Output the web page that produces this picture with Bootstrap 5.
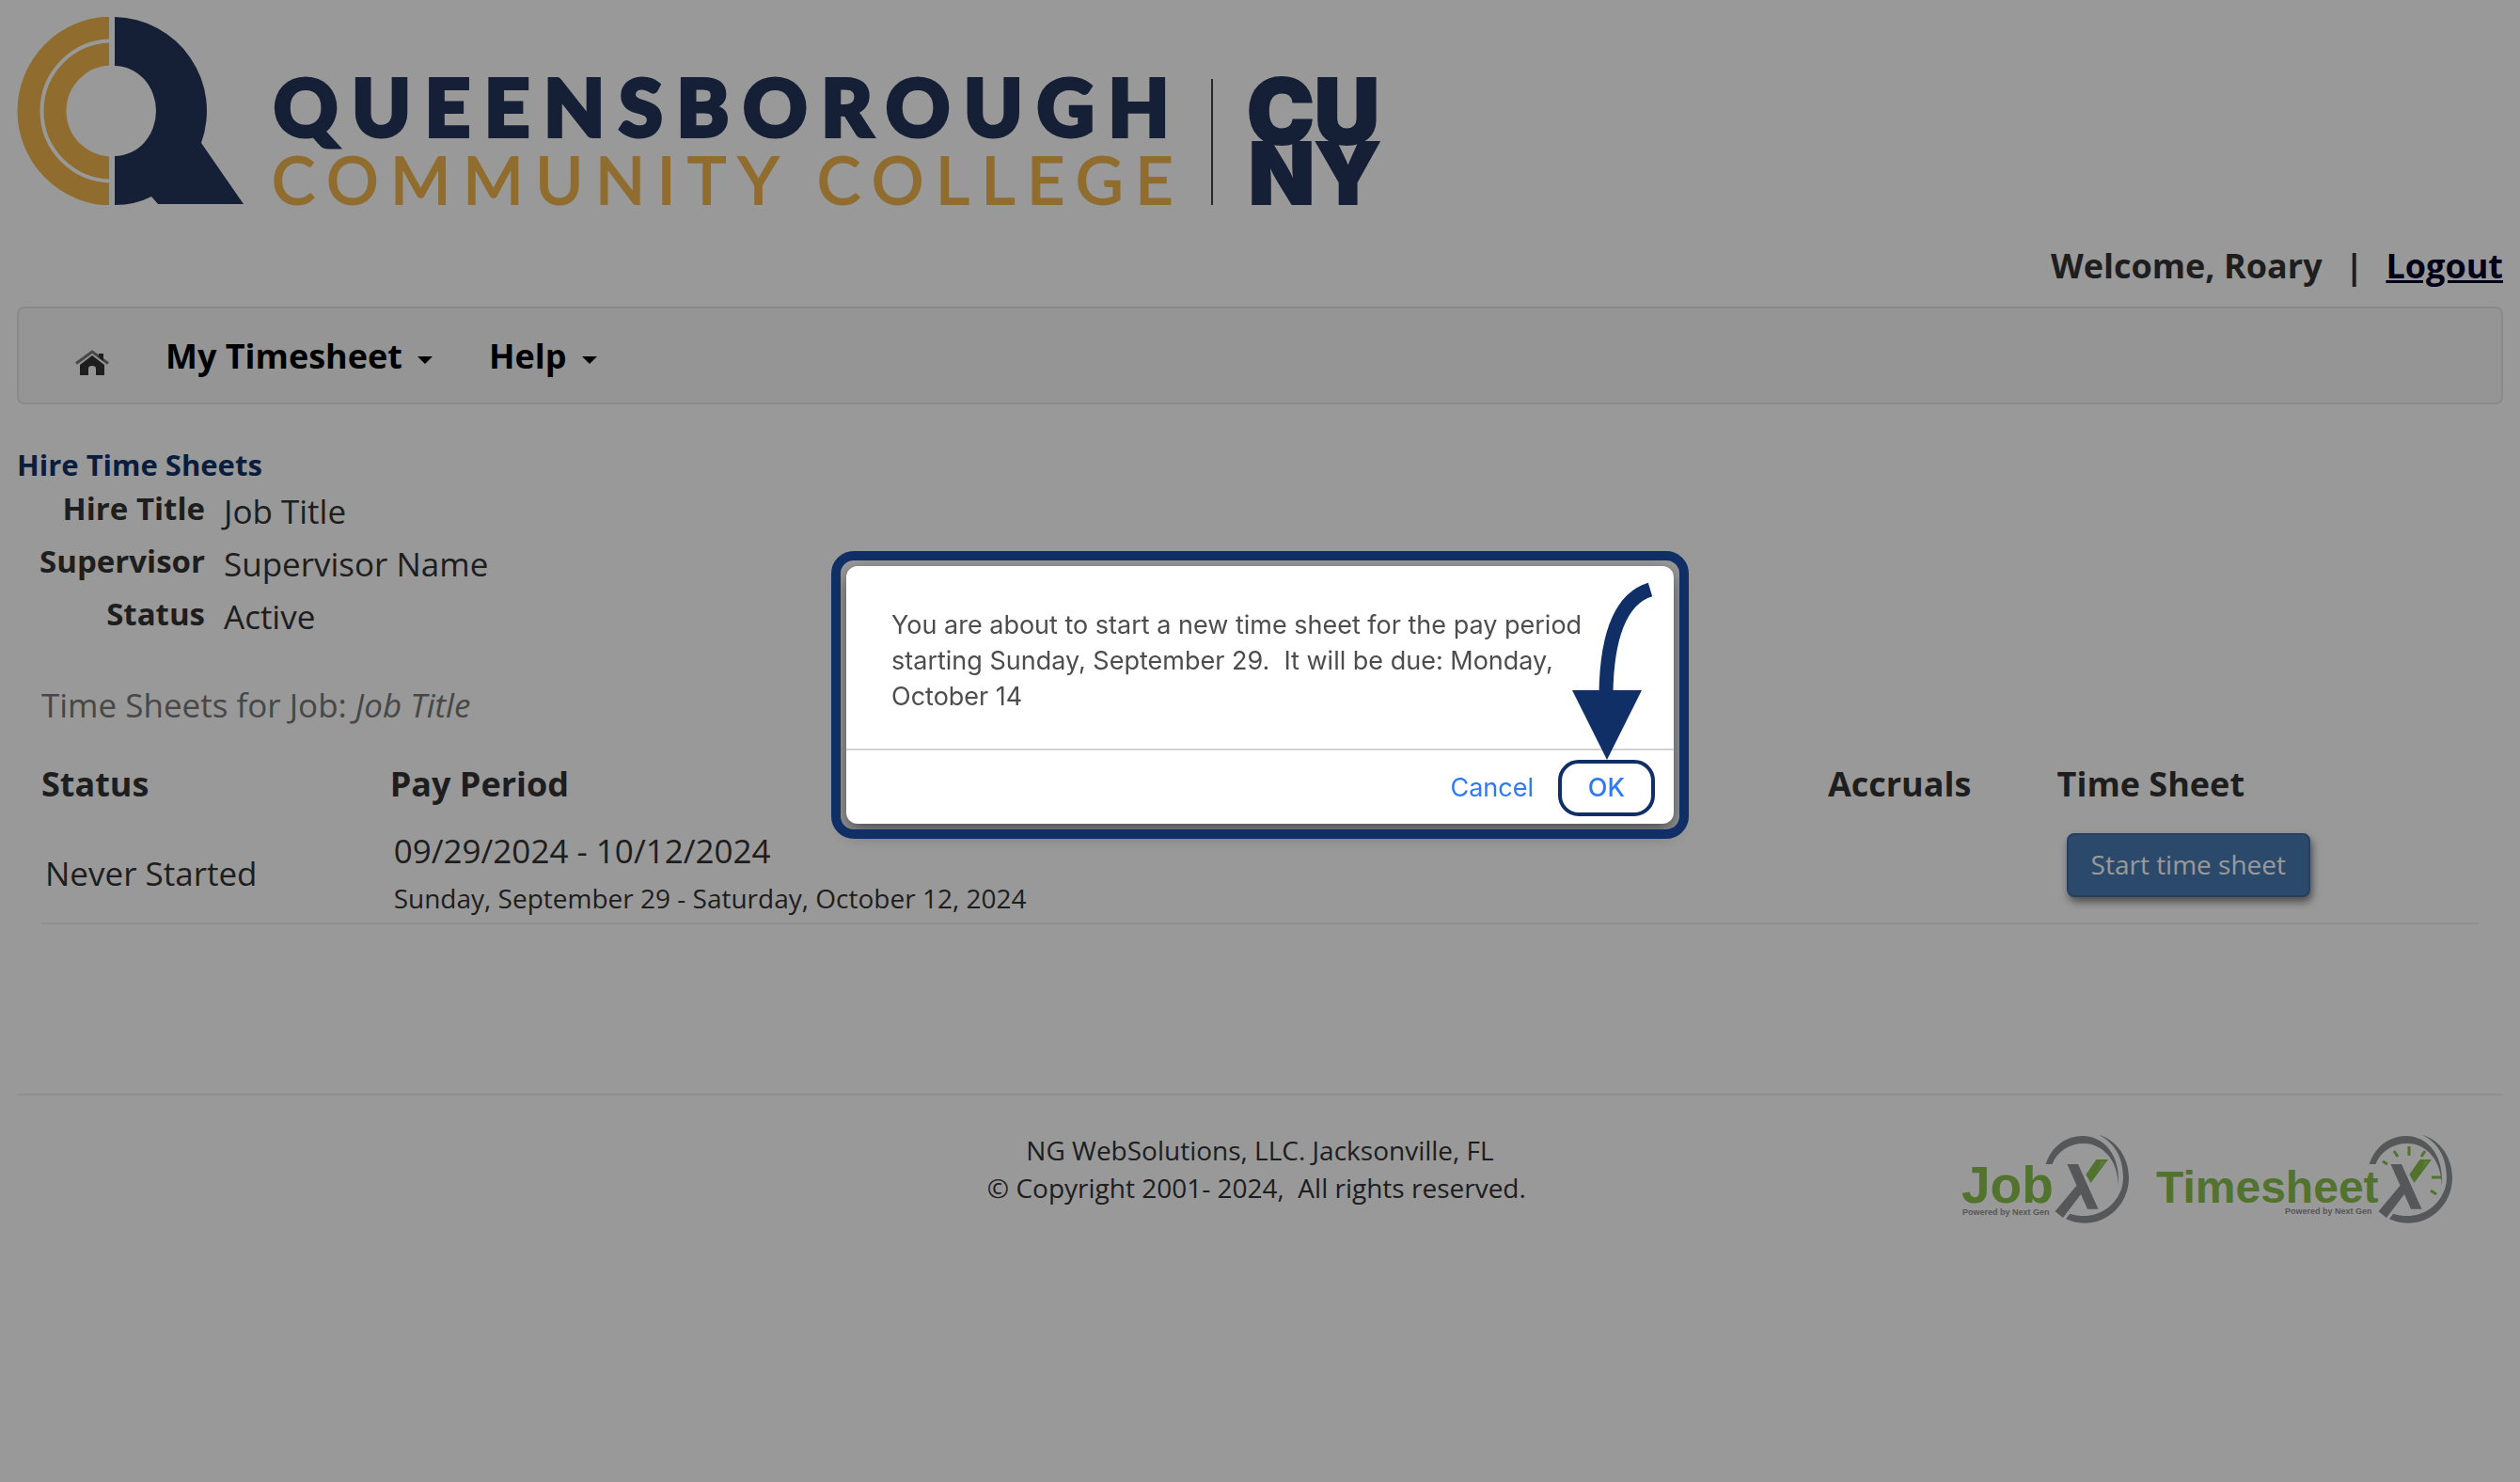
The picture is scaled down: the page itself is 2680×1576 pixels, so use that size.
<!DOCTYPE html>
<html lang="en">
<head>
<meta charset="utf-8">
<meta name="viewport" content="width=device-width, initial-scale=1">
<title>Hire Time Sheets</title>
<link href="https://cdn.jsdelivr.net/npm/bootstrap@5.3.0/dist/css/bootstrap.min.css" rel="stylesheet">
<style>
  body { font-family: "Open Sans", "Noto Sans", sans-serif; font-size: 35px; line-height: 40px; color: #333; background: #fff; }
  .page-wrap { padding: 18px; }
  .brand-logo { display: block; width: 1450px; max-width: 100%; height: auto; overflow: visible; }
  .brand-main { font-family: Lato, sans-serif; font-weight: 900; font-size: 84px; letter-spacing: 15px; stroke: #23345a; stroke-width: 4; }
  .brand-sub { font-family: Lato, sans-serif; font-weight: 400; font-size: 69px; letter-spacing: 13px; stroke: #f0b64e; stroke-width: 2; }
  .brand-cuny { font-family: Inter, sans-serif; font-weight: 900; stroke: #23345a; stroke-width: 2; }
  .user-bar { margin-top: 45px; margin-bottom: 23px; font-size: 36px; font-weight: 700; }
  .user-bar a { color: #00002b; }
  .main-nav { min-height: 104px; padding: 2px 60px 0; background: #f8f8f8; border: 2px solid #e7e7e7; border-radius: 8px; }
  .main-nav .navbar-nav { gap: 60px; }
  .main-nav .nav-link { color: #000; font-size: 36px; font-weight: 700; }
  .main-nav .home-link { margin-top: 12px; line-height: 1; }
  .main-nav .home-link svg { display: block; }
  .main-nav .dropdown-toggle::after { margin-left: 16px; border-width: 8px 8px 0; vertical-align: 5px; }
  .page-title { margin: 44px 0 2px; font-size: 31px; line-height: 40px; font-weight: 700; color: #0f3268; }
  .hire-info { display: grid; grid-template-columns: 200px 1fr; column-gap: 20px; margin: 0; }
  .hire-info dt { font-size: 33px; line-height: 50px; font-weight: 700; text-align: right; }
  .hire-info dd { margin: 0; line-height: 56px; }
  .sheet-area { padding: 0 26px; margin-top: 46px; margin-bottom: 180px; }
  .sheet-caption { margin: 0 0 44px; font-size: 35px; line-height: 40px; font-weight: 400; color: #777; }
  .sheet-table { width: 100%; table-layout: fixed; }
  .sheet-table th { padding: 0 0 22px; font-size: 36px; font-weight: 700; }
  .sheet-table td { height: 106px; padding: 0 4px; border-bottom: 2px solid #eee; vertical-align: middle; }
  .sheet-table td.period-cell { padding-top: 9px; vertical-align: top; }
  .sheet-table td.action-cell { padding: 10px 10px 0; vertical-align: top; }
  .w-status { width: 14.3%; } .w-period { width: 59%; } .w-accruals { width: 9.4%; }
  .period-long { padding-top: 10px; font-size: 28px; }
  .btn-start { display: block; padding: 11px 24px 13px; font-size: 28px; line-height: 40px; color: #fff; background: #487ab2; border: 2px solid #3e699d; border-radius: 8px; box-shadow: 2px 5px 8px rgba(0,0,0,.5); }
  .site-footer { border-top: 2px solid #eee; padding-top: 38px; font-size: 28px; }
  .partner-logos { gap: 26px; padding-right: 52px; padding-top: 3px; }
  .partner-name { font-family: "Liberation Sans", sans-serif; font-weight: 700; }
  .confirm-modal { background: rgba(0,0,0,.4); overflow: hidden; }
  .confirm-modal .modal-dialog { max-width: 880px; margin: 602px auto 0; }
  .confirm-modal .modal-content { border: 0; border-radius: 12px; box-shadow: 0 8px 20px rgba(0,0,0,.5); font-family: Inter, sans-serif; font-size: 27px; line-height: 38px; color: #4d4d4d; }
  .confirm-modal .modal-content::after { content: ""; position: absolute; inset: -16px; border: 10px solid #102f66; border-radius: 24px; pointer-events: none; }
  .confirm-modal .modal-body { padding: 44px 90px 36px 48px; }
  .confirm-modal .modal-body p { margin: 0; }
  .confirm-modal .modal-footer { margin: 0; padding: 10px 20px 8px; gap: 26px; border-top: 2px solid #d2d2d2; }
  .confirm-modal .modal-footer .btn { margin: 0; padding: 0; font-size: 27px; line-height: 38px; color: #2f78f6; border: 0; }
  .confirm-modal .modal-footer .btn-ok { width: 103px; height: 60px; border: 4px solid #102f66; border-radius: 22px; font-weight: 500; }
  .pointer-arrow { position: absolute; top: 16px; right: 20px; }
</style>
</head>
<body>
<div class="page-wrap">
  <header>
    <svg class="brand-logo" viewBox="0 0 1450 200" role="img" aria-label="Queensborough Community College, CUNY">
      <clipPath id="left-half"><rect width="98" height="200"/></clipPath>
      <g clip-path="url(#left-half)" fill="none" stroke="#f0b64e" stroke-width="24">
        <circle cx="101" cy="100" r="88.500"/>
        <circle cx="101" cy="100" r="60.500"/>
      </g>
      <path fill="#23345a" d="M104 0A100 100 0 0 1 196 134L241 199H150L143 191Q126 200 104 200V148A44 48 0 0 0 104 52Z"/>
      <text class="brand-main" x="273" y="127" fill="#23345a">QUEENSBOROUGH</text>
      <text class="brand-sub" x="271" y="199" fill="#f0b64e">COMMUNITY COLLEGE</text>
      <path d="M1271 66V200" stroke="#444" stroke-width="2"/>
      <g class="brand-cuny" fill="#23345a"><text x="1308" y="135" font-size="96">CU</text><text x="1310" y="199" font-size="91">NY</text></g>
    </svg>
    <div class="user-bar d-flex justify-content-end gap-3">
      <span>Welcome, Roary</span><span class="px-2">|</span><a href="#">Logout</a>
    </div>
    <nav class="main-nav navbar navbar-expand">
      <ul class="navbar-nav align-items-center">
        <li class="nav-item"><a class="nav-link px-0 home-link" href="#" aria-label="Home">
          <svg width="36" height="27" viewBox="0 0 36 27"><path d="M1 14.500 18 2 35 14.500" fill="none" stroke="#777" stroke-width="3"/><path d="M25 4h5v8l-5-4z" fill="#333"/><path d="M18 6 31 16V27H22V20Q22 17 18 17T14 20V27H5V16Z" fill="#333"/></svg>
        </a></li>
        <li class="nav-item dropdown"><a class="nav-link px-0 dropdown-toggle" href="#" data-bs-toggle="dropdown">My Timesheet</a></li>
        <li class="nav-item dropdown"><a class="nav-link px-0 dropdown-toggle" href="#" data-bs-toggle="dropdown">Help</a></li>
      </ul>
    </nav>
  </header>

  <main>
    <h1 class="page-title">Hire Time Sheets</h1>
    <dl class="hire-info">
      <dt>Hire Title</dt><dd>Job Title</dd>
      <dt>Supervisor</dt><dd>Supervisor Name</dd>
      <dt>Status</dt><dd>Active</dd>
    </dl>
    <section class="sheet-area">
      <h2 class="sheet-caption">Time Sheets for Job: <em>Job Title</em></h2>
      <table class="sheet-table">
        <thead><tr><th class="w-status">Status</th><th class="w-period">Pay Period</th><th class="w-accruals">Accruals</th><th>Time Sheet</th></tr></thead>
        <tbody><tr>
          <td>Never Started</td>
          <td class="period-cell"><div>09/29/2024 - 10/12/2024</div><div class="period-long">Sunday, September 29 - Saturday, October 12, 2024</div></td>
          <td></td>
          <td class="action-cell"><button type="button" class="btn btn-start">Start time sheet</button></td>
        </tr></tbody>
      </table>
    </section>
  </main>

  <footer class="site-footer">
    <div class="row g-0">
      <div class="col-4 offset-4 text-center">NG WebSolutions, LLC. Jacksonville, FL<br>© Copyright 2001- 2024,&nbsp; All rights reserved.&nbsp;</div>
      <div class="col-4 partner-logos d-flex justify-content-end">
        <svg width="182" height="96" viewBox="0 0 182 96" role="img" aria-label="JobX">
          <defs>
            <g id="x-mark">
              <g fill="#8f9194">
                <path d="M91.600 32C98 13 113 2 131 2C154 2 172 24 168.500 55C169 29 153 10 132 10C117 10 104 18 98.500 32Z"/>
                <path d="M148 1C167 6 180 25 180 46.500C180 73 159 94.700 133 94.700C125.500 94.700 119 93 113 90.300L117.200 84.700C122 86.500 127 87 133 87C155 87 174 68 174 46.500C174 25 165 9 148 1Z"/>
                <path d="M114.500 32H126L147.500 79.700H136L129 64L110 89L101.500 82.300L124.500 54.700Z"/>
              </g>
              <path fill="#87c04e" d="M145.500 27H158L139.400 52L134.400 43Z"/>
              <path fill="#9fce72" d="M150 29H155L145 41Q151 33 150 29Z"/>
            </g>
          </defs>
          <text class="partner-name" x="2" y="73" font-size="55" fill="#87c04e">Job</text>
          <text class="partner-name" x="3" y="86" font-size="9" fill="#8f9194">Powered by Next Gen</text>
          <use href="#x-mark"/>
        </svg>
        <svg width="318" height="96" viewBox="0 0 318 96" role="img" aria-label="TimesheetX">
          <text class="partner-name" x="1" y="73" font-size="48" fill="#87c04e">Timesheet</text>
          <text class="partner-name" x="138" y="85" font-size="9" fill="#8f9194">Powered by Next Gen</text>
          <use href="#x-mark" x="136"/>
          <path d="M270 13V23M254 18l4 6M287 18l-4 6M242 29l5 3M294 46h10M293 60l6 4" stroke="#87c04e" stroke-width="3"/>
        </svg>
      </div>
    </div>
  </footer>
</div>

<div class="modal show d-block confirm-modal" tabindex="-1" role="dialog" aria-modal="true" aria-labelledby="confirm-text">
  <div class="modal-dialog">
    <div class="modal-content">
      <div class="modal-body"><p id="confirm-text">You are about to start a new time sheet for the pay period starting Sunday, September 29.&nbsp; It will be due: Monday, October 14</p></div>
      <div class="modal-footer justify-content-end">
        <button type="button" class="btn btn-cancel">Cancel</button>
        <button type="button" class="btn btn-ok">OK</button>
      </div>
      <svg class="pointer-arrow" width="90" height="190" viewBox="0 0 90 190" aria-hidden="true">
        <path d="M85 9C52 19 39 62 38 118" fill="none" stroke="#102f66" stroke-width="15"/>
        <path d="M2 116H76L39 190Z" fill="#102f66"/>
      </svg>
    </div>
  </div>
</div>
<script src="https://cdn.jsdelivr.net/npm/bootstrap@5.3.0/dist/js/bootstrap.bundle.min.js"></script>
</body>
</html>
